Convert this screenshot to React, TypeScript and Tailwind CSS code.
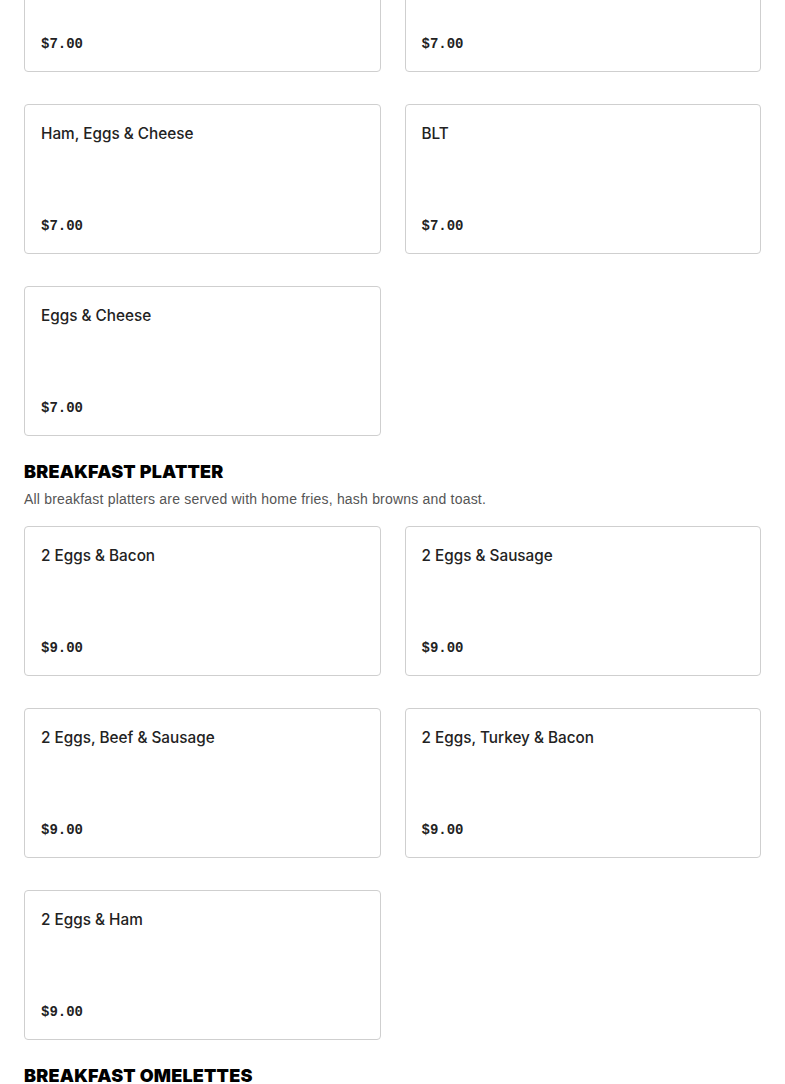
import React from 'react'

type Item = { name: string; price: string }

const sections: { title?: string; note?: string; items: Item[] }[] = [
  {
    items: [
      { name: 'Bacon, Eggs & Cheese', price: '$7.00' },
      { name: 'Sausage, Eggs & Cheese', price: '$7.00' },
      { name: 'Ham, Eggs & Cheese', price: '$7.00' },
      { name: 'BLT', price: '$7.00' },
      { name: 'Eggs & Cheese', price: '$7.00' },
    ],
  },
  {
    title: 'Breakfast Platter',
    note: 'All breakfast platters are served with home fries, hash browns and toast.',
    items: [
      { name: '2 Eggs & Bacon', price: '$9.00' },
      { name: '2 Eggs & Sausage', price: '$9.00' },
      { name: '2 Eggs, Beef & Sausage', price: '$9.00' },
      { name: '2 Eggs, Turkey & Bacon', price: '$9.00' },
      { name: '2 Eggs & Ham', price: '$9.00' },
    ],
  },
  {
    title: 'Breakfast Omelettes',
    items: [],
  },
]

//-----------------------
//  CARD
//-----------------------
const MenuCard = ({ item }: { item: Item }) => (
  <div className="flex h-[150px] flex-col justify-between rounded-[4px] border border-[#cfcfcf] bg-white px-4 pt-[17px] pb-[15px]">
    <p className="text-[15.3px] leading-6 font-medium text-[#222]" style={{ fontFamily: 'Inter, "Liberation Sans", sans-serif' }}>
      {item.name}
    </p>
    <p className="text-[14px] leading-6 font-bold text-[#222]" style={{ fontFamily: '"Liberation Mono", monospace' }}>
      {item.price}
    </p>
  </div>
)

export default function App() {
  return (
    <div className="min-h-screen bg-white px-6" style={{ fontFamily: '"Liberation Sans", Arial, sans-serif' }}>
      <div className="-mt-[78px]">
        {sections.map((section, i) => (
          <div key={i} className={i > 0 ? 'mt-6' : ''}>
            {section.title && (
              <h2
                className="text-[18px] leading-6 font-black uppercase tracking-[0.2px] text-black"
                style={{ fontFamily: 'Inter, "Liberation Sans", sans-serif' }}
              >
                {section.title}
              </h2>
            )}
            {section.note && <p className="mt-[5px] text-[14px] leading-5 tracking-[0.2px] text-[#555]">{section.note}</p>}
            {section.items.length > 0 && (
              <div className={`grid grid-cols-2 gap-x-6 gap-y-8 ${section.title ? 'mt-[17px]' : ''}`}>
                {section.items.map((item, j) => (
                  <MenuCard key={j} item={item} />
                ))}
              </div>
            )}
          </div>
        ))}
      </div>
    </div>
  )
}
